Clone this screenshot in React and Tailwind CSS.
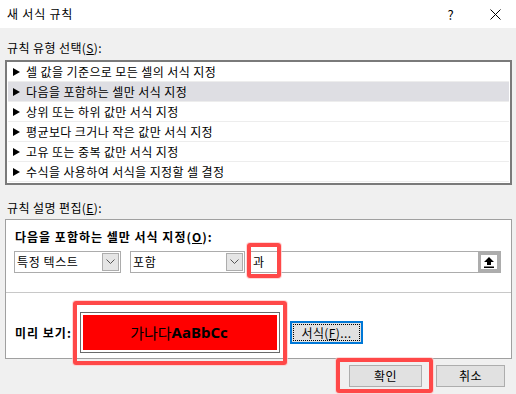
import React from "react";

const font = { fontFamily: '"Noto Sans CJK KR", "Noto Sans", sans-serif' };

function Tri() {
  return (
    <svg width="7" height="8" viewBox="0 0 7 8" className="shrink-0">
      <polygon points="0,0 7,4 0,8" fill="#000" />
    </svg>
  );
}

function Chevron() {
  return (
    <svg width="9" height="6" viewBox="0 0 9 6">
      <polyline points="0.5,0.5 4.5,4.5 8.5,0.5" fill="none" stroke="#555" strokeWidth="1" />
    </svg>
  );
}

function Dropdown({ label, w }) {
  return (
    <div className={`flex h-[22px] items-stretch border border-[#acacac] bg-white ${w}`}>
      <div className="flex flex-1 items-center pl-[2px] text-[12px] leading-none tracking-[0.6px]">{label}</div>
      <div className="my-[1px] mr-[1px] flex w-[17px] items-center justify-center border border-[#adadad] bg-[#e5e5e5]">
        <Chevron />
      </div>
    </div>
  );
}

const rows = [
  "셀 값을 기준으로 모든 셀의 서식 지정",
  "다음을 포함하는 셀만 서식 지정",
  "상위 또는 하위 값만 서식 지정",
  "평균보다 크거나 작은 값만 서식 지정",
  "고유 또는 중복 값만 서식 지정",
  "수식을 사용하여 서식을 지정할 셀 결정",
];

export default function App() {
  return (
    <div
      className="relative flex h-[394px] w-[516px] flex-col overflow-hidden bg-[#f0f0f0] text-[12px] tracking-[0.4px] text-black"
      style={font}
    >
      {/* title bar */}
      <div className="flex h-[28px] shrink-0 items-center bg-white pl-[7px]">
        <span className="flex-1 leading-none tracking-[0.8px]">새 서식 규칙</span>
        <span className="mr-[36px] text-[13px] leading-none">?</span>
        <svg width="11" height="11" viewBox="0 0 11 11" className="mr-[15px]">
          <path d="M0.5,0.5 L10.5,10.5 M10.5,0.5 L0.5,10.5" stroke="#000" strokeWidth="1" />
        </svg>
      </div>

      <div className="flex flex-col pl-[5px] pr-[4px]">
        <div className="mt-[10px] h-[20px] pl-[2px] leading-[20px]">
          규칙 유형 선택(<u>S</u>):
        </div>
        <div className="mt-[2px] h-[125px] border-2 border-[#7a7a7a] bg-white px-[1px]">
          {rows.map((r, i) => (
            <div
              key={i}
              className={`flex h-[20px] items-center gap-[6px] border-b border-[#ededed] pl-[5px] ${
                i === 1 ? "bg-[#dedee3]" : ""
              }`}
            >
              <Tri />
              <span className="leading-none">{r}</span>
            </div>
          ))}
        </div>

        <div className="mt-[13px] h-[20px] pl-[2px] leading-[20px]">
          규칙 설명 편집(<u>E</u>):
        </div>
        <div className="mt-[1px] flex h-[140px] flex-col border border-[#a0a0a0] bg-white">
          <div className="flex h-[72px] flex-col pl-[8px] pr-[10px] pt-[7px]">
            <div className="h-[20px] pl-[1px] font-bold leading-[20px] tracking-[1px]">
              다음을 포함하는 셀만 서식 지정(<u>O</u>):
            </div>
            <div className="mt-[4px] flex items-center">
              <Dropdown label="특정 텍스트" w="w-[107px]" />
              <div className="w-[9px]" />
              <Dropdown label="포함" w="w-[115px]" />
              <div className="w-[5px]" />
              <div className="flex h-[22px] flex-1 items-stretch border border-[#acacac] bg-white">
                <div className="flex flex-1 items-center pl-[2px] leading-none">과</div>
                <div className="flex w-[22px] items-center justify-center border-[3px] border-[#adadad] bg-white">
                  <svg width="10" height="11" viewBox="0 0 10 11">
                    <polygon points="5,0 10,5 7,5 7,8 3,8 3,5 0,5" fill="#000" />
                    <rect x="0" y="9.5" width="10" height="1.5" fill="#000" />
                  </svg>
                </div>
              </div>
            </div>
          </div>
          <div className="h-[1px] bg-[#c8c8c8]" />
          <div className="flex items-center pl-[9px] pt-[19px]">
            <div className="w-[65px] font-bold leading-none tracking-[1px]">미리 보기:</div>
            <div className="flex h-[41px] w-[200px] border border-[#6a6a6a] bg-white p-[2px]">
              <div className="flex flex-1 items-center justify-center bg-[#ff0000] pr-[2px] text-[15px] leading-none tracking-normal">
                <span>가나다</span>
                <span className="font-bold" style={{ fontFamily: '"Noto Sans", sans-serif' }}>
                  AaBbCc
                </span>
              </div>
            </div>
            <div className="ml-[10px] flex h-[23px] w-[73px] border-2 border-[#0078d7] bg-[#e1e1e1] p-[1px]">
              <div className="flex flex-1 items-center justify-center border border-dotted border-black leading-none">
                서식(<u>F</u>)...
              </div>
            </div>
          </div>
        </div>

        <div className="mt-[6px] flex justify-end pr-[7px]">
          <div className="flex h-[22px] w-[73px] items-center justify-center border border-[#adadad] bg-[#e1e1e1] leading-none">
            확인
          </div>
          <div className="ml-[14px] flex h-[22px] w-[69px] items-center justify-center border border-[#adadad] bg-[#e1e1e1] leading-none">
            취소
          </div>
        </div>
      </div>

      {/* red highlight overlays */}
      <div className="pointer-events-none absolute left-[247px] top-[243px] h-[35px] w-[34px] rounded-[3px] border-4 border-[#ff4848] shadow-[0_0_0_1px_rgba(255,200,200,0.7)]" />
      <div className="pointer-events-none absolute left-[73px] top-[301px] h-[64px] w-[214px] rounded-[3px] border-4 border-[#ff4848] shadow-[0_0_0_1px_rgba(255,200,200,0.7)]" />
      <div className="pointer-events-none absolute left-[336px] top-[358px] h-[35px] w-[97px] rounded-[3px] border-4 border-[#ff4848] shadow-[0_0_0_1px_rgba(255,200,200,0.7)]" />
    </div>
  );
}
